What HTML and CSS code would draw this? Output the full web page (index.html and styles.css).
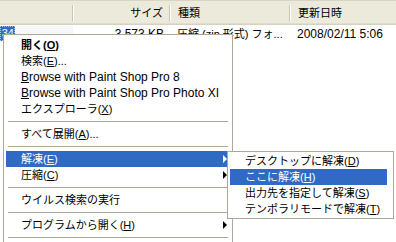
FILE: index.html
```html
<!DOCTYPE html>
<html lang="ja">
<head>
  <meta charset="UTF-8" />
  <title>Explorer context menu</title>
  <link rel="stylesheet" href="styles.css">
</head>
<body>
  <main class="explorer">
    <div class="list-header">
      <div class="col col-name"></div>
      <div class="col col-size">サイズ</div>
      <div class="col col-type">種類</div>
      <div class="col col-date">更新日時</div>
    </div>

    <div class="list-row">
      <div class="cell cell-name">
        <span class="selected-name">34</span>
      </div>
      <div class="cell cell-size latin">3,573 KB</div>
      <div class="cell cell-type">圧縮 (zip 形式) フォ...</div>
      <div class="cell cell-date latin">2008/02/11 5:06</div>
    </div>

    <div class="menu main-menu">
      <div class="item bold">開く(<u>O</u>)</div>
      <div class="item">検索(<u>E</u>)...</div>
      <div class="item latin"><u>B</u>rowse with Paint Shop Pro 8</div>
      <div class="item latin"><u>B</u>rowse with Paint Shop Pro Photo XI</div>
      <div class="item">エクスプローラ(<u>X</u>)</div>
      <div class="sep"></div>
      <div class="item">すべて展開(<u>A</u>)...</div>
      <div class="sep"></div>
      <div class="item active has-sub">解凍(<u>E</u>)</div>
      <div class="item has-sub">圧縮(<u>C</u>)</div>
      <div class="sep"></div>
      <div class="item">ウイルス検索の実行</div>
      <div class="sep"></div>
      <div class="item has-sub">プログラムから開く(<u>H</u>)</div>
      <div class="sep"></div>
    </div>

    <div class="menu sub-menu">
      <div class="item">デスクトップに解凍(<u>D</u>)</div>
      <div class="item active">ここに解凍(<u>H</u>)</div>
      <div class="item">出力先を指定して解凍(<u>S</u>)</div>
      <div class="item">テンポラリモードで解凍(<u>T</u>)</div>
    </div>
  </main>
</body>
</html>
```

FILE: styles.css
```css
* {
  box-sizing: border-box;
}

body {
  margin: 0;
  font-family: "Liberation Sans", "Noto Sans CJK JP", sans-serif;
  font-size: 11px;
  color: #000;
  background: #fff;
}

.explorer {
  position: relative;
  width: 396px;
  height: 242px;
  overflow: hidden;
}

.latin {
  font-size: 12px;
}

/* list view */

.list-header,
.list-row {
  display: grid;
  grid-template-columns: 73px 97px 120px 1fr;
}

.list-header {
  height: 25px;
  align-items: center;
  background: #ebeadb;
  border-top: 1px solid #d8d5c6;
  box-shadow: inset 0 -1px #d6d2c2, inset 0 -2px #e2decd;
}

.col {
  height: 17px;
  line-height: 17px;
  border-right: 1px solid #cbc7b8;
  box-shadow: 1px 0 #fff;
  white-space: nowrap;
}

.col-size {
  text-align: right;
  padding-right: 6px;
}

.col-type,
.col-date {
  padding-left: 8px;
}

.col-date {
  border-right: none;
  box-shadow: none;
}

.list-row {
  height: 16px;
  margin-top: 1px;
  line-height: 16px;
  white-space: nowrap;
}

.cell {
  overflow: hidden;
}

.cell-name {
  background: #f7f7f7;
}

.selected-name {
  display: block;
  width: 15px;
  height: 15px;
  line-height: 13px;
  text-align: right;
  color: #fff;
  background: #316ac5;
  border: 1px dotted #a9c2ea;
  overflow: hidden;
}

.cell-size {
  text-align: right;
  padding-right: 6px;
}

.cell-type,
.cell-date {
  padding-left: 7px;
}

/* context menus */

.menu {
  position: absolute;
  background: #fff;
  border: 1px solid #aca899;
  white-space: nowrap;
}

.main-menu {
  left: 3px;
  top: 34px;
  width: 230px;
  padding: 2px 2px 0;
}

.sub-menu {
  left: 227px;
  top: 151px;
  width: 167px;
  padding: 1px 6px 1px 2px;
}

.item {
  position: relative;
  height: 16px;
  line-height: 16px;
  padding-left: 15px;
}

.item.bold {
  font-weight: bold;
}

.item.active {
  background: #316ac5;
  color: #fff;
}

.has-sub::after {
  content: "";
  position: absolute;
  right: 3px;
  top: 4px;
  border-top: 4px solid transparent;
  border-bottom: 4px solid transparent;
  border-left: 4px solid #000;
}

.has-sub.active::after {
  border-left-color: #fff;
}

.sep {
  height: 9px;
  margin: 0 2px;
  background: linear-gradient(#fff 4px, #aca899 4px, #aca899 5px, #fff 5px);
}

u {
  text-decoration-thickness: 1px;
  text-underline-offset: 1px;
}
```
